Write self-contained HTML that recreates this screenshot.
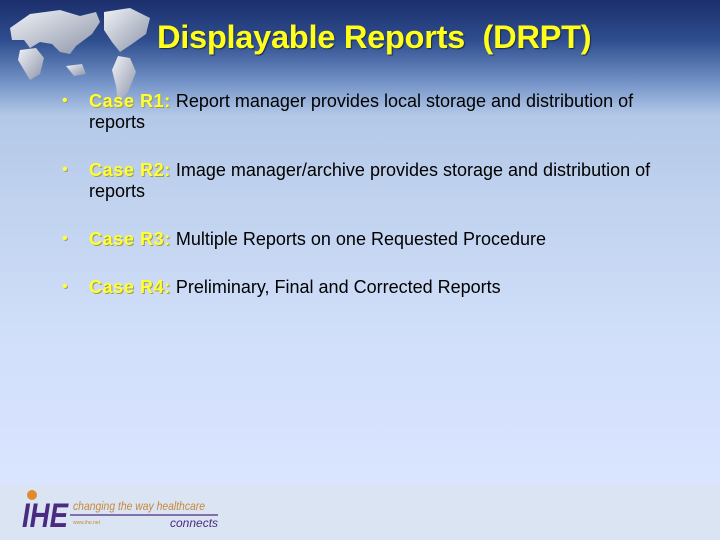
<!DOCTYPE html>
<html><head><meta charset="utf-8"><style>
html,body{margin:0;padding:0}
body{width:720px;height:540px;position:relative;overflow:hidden;font-family:"Liberation Sans",Arial,sans-serif;
background:linear-gradient(180deg,#1c2f6c 0px,#2e4d8e 40px,#6f8fc4 80px,#b3c8e8 115px,#c0d2ee 200px,#d2e0fb 350px,#dae4ff 484px);}
.foot{position:absolute;left:0;top:485px;width:720px;height:55px;background:#dbe4f2}
h1{position:absolute;left:157px;top:19px;margin:0;color:#ffff1a;font-size:32px;font-weight:bold;white-space:pre;letter-spacing:-0.3px;text-shadow:1px 1px 1px #1a2a55;transform:scaleX(1.02);transform-origin:left}
.b{position:absolute;left:62px;font-size:18px;color:#000;line-height:21px;width:600px;letter-spacing:0}
.b .d{position:absolute;left:0;top:-1px;font-size:16px;color:#ffff33;text-shadow:1px 1px 0 #999}
.b .t{display:block;margin-left:27px;width:570px}
.y{color:#ffff33;font-weight:bold;letter-spacing:0.6px;text-shadow:1px 1px 0 #9a9a60}
</style></head><body>
<svg style="position:absolute;left:0;top:0" width="180" height="120" viewBox="0 0 180 120">
<defs><linearGradient id="g" x1="0" y1="0" x2="1" y2="1"><stop offset="0" stop-color="#f0f2f6"/><stop offset="1" stop-color="#8c94a8"/></linearGradient></defs>
<g fill="url(#g)">
<path d="M10 28 L30 14 L60 10 L80 16 L96 12 L100 22 L92 34 L84 40 L76 46 L70 54 L60 52 L52 44 L40 42 L30 48 L24 40 L12 40 Z"/>
<path d="M20 50 L36 48 L44 58 L40 74 L30 80 L24 70 L18 60 Z"/>
<path d="M66 66 L82 64 L86 74 L74 76 Z"/>
<path d="M104 12 L130 8 L150 18 L146 34 L132 44 L120 52 L112 42 L104 30 Z"/>
<path d="M118 56 L130 58 L136 72 L128 92 L118 102 L116 86 L112 70 Z"/>
</g></svg>
<h1>Displayable Reports  (DRPT)</h1>
<div class="b" style="top:91px"><span class="d">•</span><span class="t"><span class="y">Case R1:</span> Report manager provides local storage and distribution of reports</span></div>
<div class="b" style="top:160px"><span class="d">•</span><span class="t"><span class="y">Case R2:</span> Image manager/archive provides storage and distribution of reports</span></div>
<div class="b" style="top:229px"><span class="d">•</span><span class="t"><span class="y">Case R3:</span> Multiple Reports on one Requested Procedure</span></div>
<div class="b" style="top:277px"><span class="d">•</span><span class="t"><span class="y">Case R4:</span> Preliminary, Final and Corrected Reports</span></div>
<div class="foot"></div>
<svg style="position:absolute;left:20px;top:488px" width="200" height="45" viewBox="0 0 200 45">
<circle cx="12" cy="7" r="5" fill="#e08a30"/>
<text x="2" y="39" font-family="Liberation Sans" font-weight="bold" font-style="italic" font-size="34" fill="#4b2a82" textLength="46" lengthAdjust="spacingAndGlyphs">IHE</text>
<text x="53" y="22" font-family="Liberation Sans" font-style="italic" font-size="12" fill="#c8883a" textLength="132" lengthAdjust="spacingAndGlyphs">changing the way healthcare</text>
<line x1="50" y1="27" x2="198" y2="27" stroke="#4b2a82" stroke-width="1.2"/>
<text x="53" y="36" font-family="Liberation Sans" font-size="5" fill="#c8883a">www.ihe.net</text>
<text x="150" y="39" font-family="Liberation Sans" font-style="italic" font-size="12" fill="#4b2a82">connects</text>
</svg>
</body></html>
